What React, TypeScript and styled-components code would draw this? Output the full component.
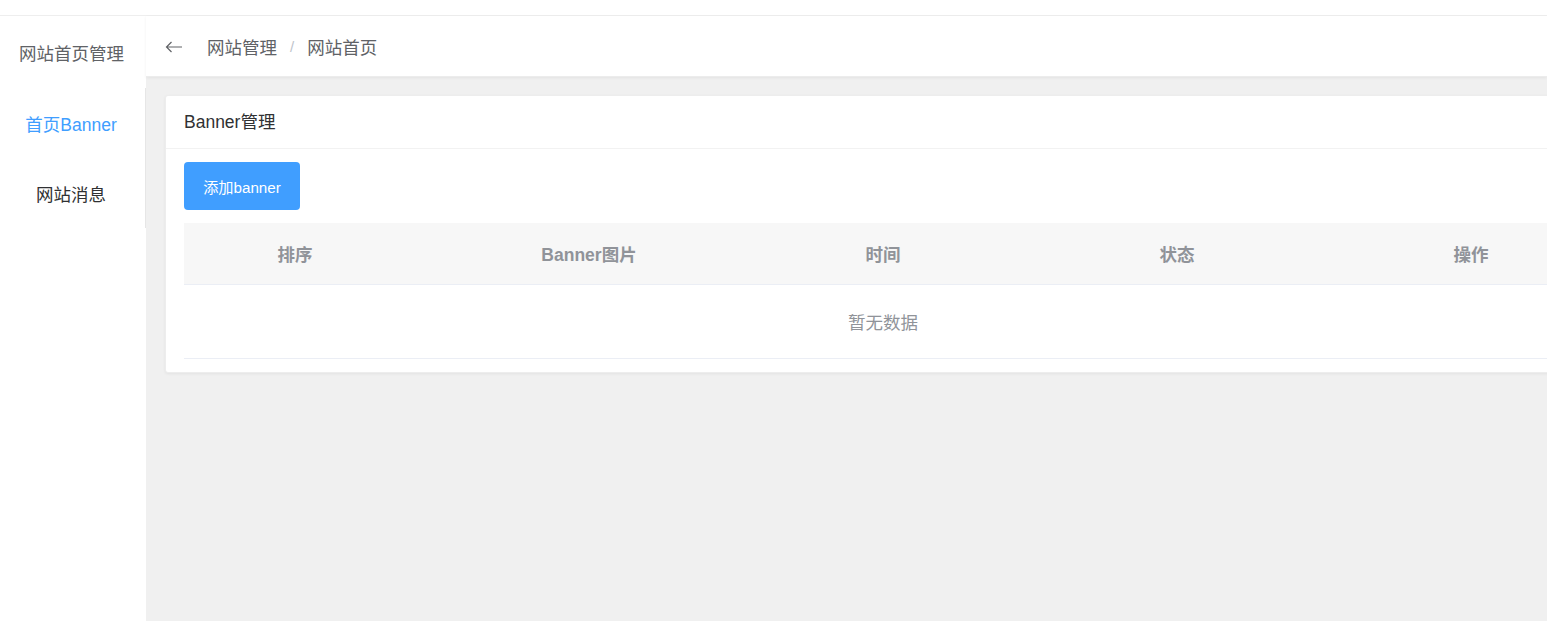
import React from "react";
import styled, { createGlobalStyle } from "styled-components";

const GlobalStyle = createGlobalStyle`
  html, body { margin: 0; padding: 0; background: #ffffff; overflow: hidden; }
  body { font-family: "Liberation Sans", "Noto Sans CJK SC", sans-serif; }
  * { box-sizing: border-box; }
`;

const Page = styled.div`
  width: 1547px;
  height: 621px;
  display: flex;
  flex-direction: column;
  overflow: hidden;
`;

const TopStrip = styled.div`
  height: 16px;
  flex: none;
  border-bottom: 1px solid #eeeeee;
  background: #ffffff;
`;

const Body = styled.div`
  flex: 1;
  display: flex;
  min-height: 0;
`;

const Sidebar = styled.aside`
  width: 146px;
  flex: none;
  background: #ffffff;
  display: flex;
  flex-direction: column;
`;

const SideTitle = styled.div`
  height: 72px;
  display: flex;
  align-items: center;
  justify-content: center;
  padding-right: 3px;
  font-size: 17.5px;
  color: #606266;
`;

const Menu = styled.ul`
  list-style: none;
  margin: 0;
  padding: 0;
  border-right: 1px solid #e6e6e6;
`;

const MenuItem = styled.li<{ $active?: boolean }>`
  height: 70px;
  display: flex;
  align-items: center;
  justify-content: center;
  padding-right: 3px;
  font-size: 17.5px;
  color: ${(p) => (p.$active ? "#409eff" : "#303133")};
`;

const Main = styled.main`
  flex: 1;
  min-width: 0;
  background: #f0f0f0;
  display: flex;
  flex-direction: column;
`;

const Header = styled.header`
  height: 61px;
  flex: none;
  background: #ffffff;
  display: flex;
  align-items: center;
  padding-left: 19px;
  box-shadow: 0 1px 3px rgba(0, 0, 0, 0.06);
  border-bottom: 1px solid #ececec;
`;

const BackIcon = styled.svg`
  width: 18px;
  height: 12px;
  color: #606266;
  margin-right: 24px;
  margin-top: 1px;
`;

const Crumbs = styled.nav`
  display: flex;
  align-items: center;
  font-size: 17.5px;
  color: #606266;
`;

const Sep = styled.span`
  color: #c0c4cc;
  margin: 0 13px;
  font-size: 15px;
`;

const Content = styled.div`
  padding: 18px 0 0 19px;
`;

const Card = styled.section`
  width: 1420px;
  background: #ffffff;
  border-radius: 3px;
  box-shadow: 0 1px 3px rgba(0, 0, 0, 0.06);
  border: 1px solid #ededed;
`;

const CardHeader = styled.div`
  height: 53px;
  display: flex;
  align-items: center;
  padding: 0 18px 3px;
  font-size: 17.5px;
  color: #303133;
  border-bottom: 1px solid #f2f2f2;
`;

const CardBody = styled.div`
  padding: 13px 0 13px 18px;
`;

const PrimaryButton = styled.button`
  display: block;
  width: 116px;
  height: 48px;
  border: none;
  border-radius: 4px;
  background: #409eff;
  color: #ffffff;
  font-family: inherit;
  font-size: 15.2px;
  padding: 0;
  cursor: pointer;
`;

const Table = styled.div`
  margin-top: 13px;
  width: 1398px;
`;

const HeadRow = styled.div`
  display: grid;
  grid-template-columns: 222px 366px 222px 366px 222px;
  height: 62px;
  align-items: center;
  background: #f7f7f7;
  border-bottom: 1px solid #ebeef5;
`;

const HeadCell = styled.div`
  text-align: center;
  font-weight: bold;
  font-size: 17.5px;
  color: #909399;
`;

const EmptyRow = styled.div`
  height: 74px;
  display: flex;
  align-items: center;
  justify-content: center;
  border-bottom: 1px solid #ebeef5;
  font-size: 17.5px;
  color: #909399;
`;

const columns = ["排序", "Banner图片", "时间", "状态", "操作"];

export default function App() {
  return (
    <Page>
      <GlobalStyle />
      <TopStrip />
      <Body>
        <Sidebar>
          <SideTitle>网站首页管理</SideTitle>
          <Menu>
            <MenuItem $active>首页Banner</MenuItem>
            <MenuItem>网站消息</MenuItem>
          </Menu>
        </Sidebar>
        <Main>
          <Header>
            <BackIcon viewBox="0 0 18 12" fill="none" stroke="currentColor" strokeWidth="1.2">
              <path d="M17 6H1.5M6.5 1L1.5 6l5 5" />
            </BackIcon>
            <Crumbs>
              <span>网站管理</span>
              <Sep>/</Sep>
              <span>网站首页</span>
            </Crumbs>
          </Header>
          <Content>
            <Card>
              <CardHeader>Banner管理</CardHeader>
              <CardBody>
                <PrimaryButton>添加banner</PrimaryButton>
                <Table>
                  <HeadRow>
                    {columns.map((c) => (
                      <HeadCell key={c}>{c}</HeadCell>
                    ))}
                  </HeadRow>
                  <EmptyRow>暂无数据</EmptyRow>
                </Table>
              </CardBody>
            </Card>
          </Content>
        </Main>
      </Body>
    </Page>
  );
}
